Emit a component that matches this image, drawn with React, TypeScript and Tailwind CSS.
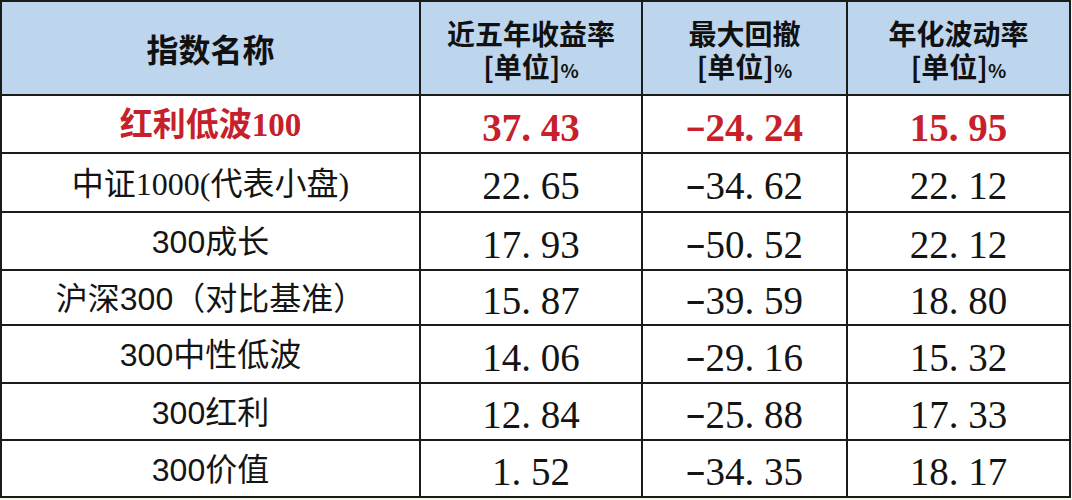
import React from 'react';

const rows = [
    { name: '红利低波100', serif: true, hl: true, a: '37.43', b: '-24.24', c: '15.95' },
    { name: '中证1000(代表小盘)', serif: true, a: '22.65', b: '-34.62', c: '22.12' },
    { name: '300成长', a: '17.93', b: '-50.52', c: '22.12' },
    { name: '沪深300（对比基准）', a: '15.87', b: '-39.59', c: '18.80' },
    { name: '300中性低波', a: '14.06', b: '-29.16', c: '15.32' },
    { name: '300红利', a: '12.84', b: '-25.88', c: '17.33' },
    { name: '300价值', a: '1.52', b: '-34.35', c: '18.17' },
];

function Num({ v, bold }: { v: string; bold?: boolean }) {
    const neg = v.startsWith('-');
    const [i, d] = (neg ? v.slice(1) : v).split('.');
    return (
        <span className={`font-['Liberation_Serif',serif] text-[39px] leading-none ${bold ? 'font-bold' : 'font-normal'}`}>
            {neg && <span className="inline-block w-[0.5em] scale-x-[1.6] -translate-y-[2px] text-center">-</span>}
            {i}
            <span className="inline-block w-[0.5em] text-left">.</span>
            {d}
        </span>
    );
}

function HeadCell({ title }: { title: string }) {
    return (
        <div className="flex flex-col items-center justify-center border-r-2 border-b-2 border-[#1b1b1b] bg-[#bdd6ee] pt-[2px] font-bold text-[28px] text-[#111]">
            <div className="h-[33px] leading-[30px]">{title}</div>
            <div className="h-[30px] leading-[30px]">
                [单位]<span className="text-[19px]">%</span>
            </div>
        </div>
    );
}

export default function App() {
    return (
        <div className="h-[500px] w-[1072px] bg-[#f3f8ef] font-['Noto_Sans_CJK_SC',sans-serif]">
            <div className="grid w-[1071px] grid-cols-[419px_222px_205px_223px] grid-rows-[94px_58px_59px_58px_55px_58px_57px_57px] border-l-2 border-t-2 border-[#1b1b1b] bg-white">
                <div className="flex items-center justify-center border-r-2 border-b-2 border-[#1b1b1b] bg-[#bdd6ee] font-bold text-[32px] text-[#111]">
                    指数名称
                </div>
                <HeadCell title="近五年收益率" />
                <HeadCell title="最大回撤" />
                <HeadCell title="年化波动率" />

                {rows.map((r) => {
                    const color = r.hl ? 'text-[#c6212b]' : 'text-[#141414]';
                    return (
                        <React.Fragment key={r.name}>
                            <div
                                className={`flex items-center justify-center border-r-2 border-b-2 border-[#1b1b1b] pt-[2px] leading-none ${color} ${r.hl ? 'font-bold text-[33px]' : 'font-normal text-[32px]'} ${r.serif ? "font-['Liberation_Serif','Noto_Sans_CJK_SC',serif]" : "font-['Liberation_Sans','Noto_Sans_CJK_SC',sans-serif]"}`}
                            >
                                {r.name}
                            </div>
                            <div className={`flex items-center justify-center border-r-2 border-b-2 border-[#1b1b1b] pt-[6px] ${color}`}>
                                <Num v={r.a} bold={r.hl} />
                            </div>
                            <div className={`flex items-center justify-center border-r-2 border-b-2 border-[#1b1b1b] pt-[6px] ${color}`}>
                                <Num v={r.b} bold={r.hl} />
                            </div>
                            <div className={`flex items-center justify-center border-r-2 border-b-2 border-[#1b1b1b] pt-[6px] ${color}`}>
                                <Num v={r.c} bold={r.hl} />
                            </div>
                        </React.Fragment>
                    );
                })}
            </div>
        </div>
    );
}
